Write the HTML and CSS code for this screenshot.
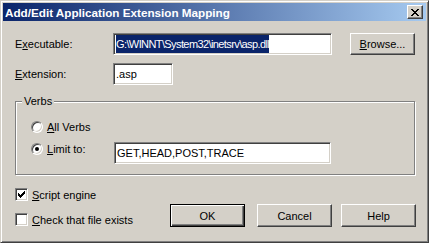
FILE: index.html
```html
<!DOCTYPE html>
<html lang="en">
<head>
  <meta charset="UTF-8">
  <link rel="stylesheet" href="styles.css">
  <title>Add/Edit Application Extension Mapping</title>
</head>
<body>
  <!-- dialog window -->
  <div class="window">
    <div class="titlebar">
      <span class="title">Add/Edit Application Extension Mapping</span>
      <span class="close-btn">
        <svg width="8" height="7" viewBox="0 0 8 7" shape-rendering="crispEdges"><path d="M0 0h2v1H0zM6 0h2v1H6zM1 1h2v1H1zM5 1h2v1H5zM2 2h4v1H2zM3 3h2v1H3zM2 4h4v1H2zM1 5h2v1H1zM5 5h2v1H5zM0 6h2v1H0zM6 6h2v1H6z"/></svg>
      </span>
    </div>
    <div class="client">
      <div class="row">
        <span class="label">E<u>x</u>ecutable:</span>
        <div class="field field-exe"><span class="selected">G:\WINNT\System32\inetsrv\asp.dll</span></div>
        <button class="btn btn-browse"><u>B</u>rowse...</button>
      </div>
      <div class="row row-ext">
        <span class="label"><u>E</u>xtension:</span>
        <div class="field field-ext">.asp</div>
      </div>

      <!-- verbs group -->
      <div class="group">
        <span class="group-title">Verbs</span>
        <div class="option option-all">
          <span class="radio"></span><span><u>A</u>ll Verbs</span>
        </div>
        <div class="option-row">
          <div class="option option-limit">
            <span class="radio checked"></span><span><u>L</u>imit to:</span>
          </div>
          <div class="field field-verbs">GET,HEAD,POST,TRACE</div>
        </div>
      </div>

      <div class="bottom">
        <div class="checks">
          <div class="check-row">
            <span class="checkbox">
              <svg width="7" height="7" viewBox="0 0 7 7" shape-rendering="crispEdges"><path d="M6 0h1v1H6zM5 1h2v1H5zM0 2h1v1H0zM4 2h3v1H4zM0 3h2v1H0zM3 3h3v1H3zM0 4h5v1H0zM1 5h3v1H1zM2 6h1v1H2z"/></svg>
            </span>
            <span><u>S</u>cript engine</span>
          </div>
          <div class="check-row">
            <span class="checkbox"></span>
            <span><u>C</u>heck that file exists</span>
          </div>
        </div>
        <div class="buttons">
          <button class="btn btn-default">OK</button>
          <button class="btn btn-cancel">Cancel</button>
          <button class="btn btn-help">Help</button>
        </div>
      </div>
    </div>
  </div>
</body>
</html>
```

FILE: styles.css
```css
body {
  margin: 0;
  font-family: "Liberation Sans", Arial, sans-serif;
  font-size: 11px;
  color: #000;
}

.window {
  box-sizing: border-box;
  width: 429px;
  height: 243px;
  background: #d4d0c8;
  border: 1px solid;
  border-color: #d4d0c8 #404040 #404040 #d4d0c8;
  box-shadow: inset 1px 1px #fff, inset -1px -1px #808080;
  padding: 2px;
}

.titlebar {
  display: flex;
  align-items: center;
  justify-content: space-between;
  height: 18px;
  padding: 0 3px 0 2px;
  background: linear-gradient(to right, #0a246a, #a6caf0);
}

.title {
  color: #fff;
  font-weight: bold;
  font-size: 11.7px;
  white-space: nowrap;
}

.close-btn {
  box-sizing: border-box;
  width: 16px;
  height: 14px;
  display: flex;
  align-items: center;
  justify-content: center;
  background: #d4d0c8;
  border: 1px solid;
  border-color: #fff #404040 #404040 #fff;
  box-shadow: inset -1px -1px #808080;
}

.client {
  padding: 12px 11px 0 12px;
}

.row {
  display: flex;
  align-items: center;
  height: 22px;
}

.row-ext {
  margin-top: 8px;
}

.label {
  width: 98px;
  flex-shrink: 0;
}

.field {
  box-sizing: border-box;
  height: 22px;
  flex-shrink: 0;
  display: flex;
  align-items: center;
  padding: 1px 2px;
  background: #fff;
  border: 1px solid;
  border-color: #808080 #fff #fff #808080;
  box-shadow: inset 1px 1px #404040, inset -1px -1px #d4d0c8;
  white-space: nowrap;
  overflow: hidden;
}

.field-exe {
  width: 219px;
}

.field-ext {
  width: 60px;
}

.field-verbs {
  width: 217px;
}

.selected {
  align-self: stretch;
  display: flex;
  align-items: center;
  letter-spacing: -0.6px;
  background: #0a246a;
  color: #fff;
}

.btn {
  box-sizing: border-box;
  flex-shrink: 0;
  width: 75px;
  height: 23px;
  padding: 0;
  font: inherit;
  color: #000;
  background: #d4d0c8;
  border: 1px solid;
  border-color: #fff #404040 #404040 #fff;
  box-shadow: inset -1px -1px #808080;
}

.btn-browse {
  width: 65px;
  height: 22px;
  margin-left: 18px;
}

.btn-default {
  border-color: #000;
  box-shadow: inset 1px 1px #fff, inset -1px -1px #404040, inset -2px -2px #808080;
}

.btn-cancel {
  margin-left: 12px;
}

.btn-help {
  margin-left: 9px;
}

/* etched group box */
.group {
  display: flex;
  flex-direction: column;
  margin-top: 16px;
  padding-bottom: 10px;
  border: 1px solid #808080;
  box-shadow: 1px 1px #fff, inset 1px 1px #fff;
}

.group-title {
  align-self: flex-start;
  margin: -7px 0 0 6px;
  padding: 0 2px;
  line-height: 13px;
  background: #d4d0c8;
}

.option {
  display: flex;
  align-items: center;
  gap: 4px;
  height: 13px;
  white-space: nowrap;
}

.option-all {
  margin: 12px 0 0 15px;
}

.option-row {
  display: flex;
  align-items: flex-start;
  margin: 9px 0 0 15px;
}

.option-limit {
  width: 83px;
  flex-shrink: 0;
}

.radio {
  box-sizing: border-box;
  width: 12px;
  height: 12px;
  display: flex;
  align-items: center;
  justify-content: center;
  border-radius: 50%;
  background: #fff;
  border: 1px solid;
  border-color: #808080 #fff #fff #808080;
  box-shadow: inset 1px 1px #404040, inset -1px -1px #d4d0c8;
}

.radio.checked::after {
  content: "";
  width: 4px;
  height: 4px;
  border-radius: 50%;
  background: #000;
}

.bottom {
  display: flex;
  margin-top: 13px;
}

.checks {
  width: 155px;
  flex-shrink: 0;
  display: flex;
  flex-direction: column;
  gap: 12px;
}

.check-row {
  display: flex;
  align-items: center;
  gap: 4px;
  height: 13px;
  white-space: nowrap;
}

.checkbox {
  box-sizing: border-box;
  width: 13px;
  height: 13px;
  display: flex;
  align-items: center;
  justify-content: center;
  background: #fff;
  border: 1px solid;
  border-color: #808080 #fff #fff #808080;
  box-shadow: inset 1px 1px #404040, inset -1px -1px #d4d0c8;
}

.buttons {
  display: flex;
  margin-top: 16px;
}
```
